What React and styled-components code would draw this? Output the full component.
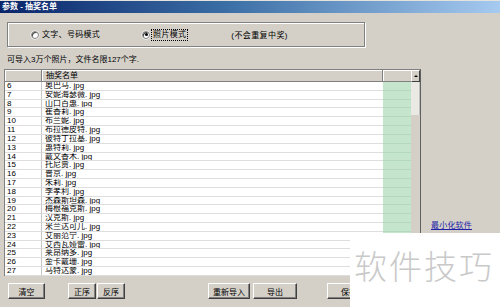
import React from "react";
import styled, { createGlobalStyle, css } from "styled-components";

const GlobalStyle = createGlobalStyle`
  html, body { margin: 0; padding: 0; background: #d4d0c8; }
  * { box-sizing: border-box; }
`;

const FONT = `"Liberation Sans", "Noto Sans CJK SC", sans-serif`;

const Window = styled.div`
  position: relative;
  width: 500px;
  height: 307px;
  overflow: hidden;
  background: #d4d0c8;
  font-family: ${FONT};
  font-size: 8px;
  color: #000;
  display: flex;
  flex-direction: column;
`;

const TitleBar = styled.div`
  height: 13px;
  border-top: 1px solid #e4e2dc;
  background: linear-gradient(90deg, #0a246a 0%, #3a6ea5 45%, #a6caf0 100%);
  color: #fff;
  font-weight: bold;
  font-size: 8px;
  line-height: 12px;
  padding-left: 2px;
  white-space: pre;
`;

const GroupBox = styled.div`
  margin: 9px 0 0 7px;
  width: 358px;
  height: 25px;
  border: 1px solid #808080;
  box-shadow: inset 1px 1px 0 #fff, 1px 1px 0 #fff;
  display: flex;
  align-items: center;
`;

const RadioOption = styled.div`
  display: flex;
  align-items: center;
  gap: 2px;
  margin-left: ${(p) => p.$left}px;
`;

const RadioCircle = styled.span`
  width: 8px;
  height: 8px;
  border-radius: 50%;
  background: #fff;
  border: 1px solid #808080;
  box-shadow: inset 1px 1px 0 #404040, 0 0 0 0.5px #fff;
  display: flex;
  align-items: center;
  justify-content: center;
  &::after {
    content: "";
    width: 3px;
    height: 3px;
    border-radius: 50%;
    background: ${(p) => (p.$checked ? "#000" : "transparent")};
  }
`;

const RadioLabel = styled.span`
  line-height: 10px;
  padding: 0 1px;
  letter-spacing: 0.3px;
  ${(p) =>
    p.$focus &&
    css`
      outline: 1px dotted #000;
      outline-offset: 0;
    `}
`;

const Note = styled.span`
  margin-left: 44px;
  letter-spacing: 0.4px;
`;

const InfoText = styled.div`
  margin: 8px 0 0 7px;
  height: 10px;
  line-height: 10px;
`;

const ListArea = styled.div`
  margin-top: 4px;
  height: 207px;
  display: flex;
`;

const Table = styled.div`
  margin-left: 4px;
  width: 417px;
  height: 207px;
  border-left: 1px solid #808080;
  border-top: 1px solid #808080;
  border-right: 1px solid #606060;
  display: flex;
  flex-direction: column;
  background: #d4d0c8;
`;

const COLS = "37px 341px 28px 9px";

const Header = styled.div`
  display: grid;
  grid-template-columns: ${COLS};
  height: 12px;
`;

const HeaderCell = styled.div`
  background: #d4d0c8;
  border-right: 1px solid #808080;
  border-bottom: 1px solid #808080;
  box-shadow: inset 1px 1px 0 #fff;
  padding-left: 4px;
  line-height: 11px;
  ${(p) => p.$merge && css`border-right: none;`}
`;

const UpButton = styled.div`
  background: #d4d0c8;
  border: 1px solid;
  border-color: #fff #404040 #404040 #fff;
  display: flex;
  align-items: center;
  justify-content: center;
  &::after {
    content: "";
    border-left: 2px solid transparent;
    border-right: 2px solid transparent;
    border-bottom: 2px solid #000;
  }
`;

const Body = styled.div`
  flex: 1;
  display: flex;
  overflow: hidden;
`;

const Rows = styled.div`
  width: 406px;
  display: flex;
  flex-direction: column;
`;

const Row = styled.div`
  display: grid;
  grid-template-columns: 37px 341px 28px;
  height: 8.82px;
  flex: none;
`;

const Cell = styled.div`
  background: ${(p) => (p.$green ? "#c6e5cd" : "#fff")};
  border-bottom: 1px solid ${(p) => (p.$green ? "#b4d8bc" : "#dedede")};
  border-right: ${(p) => (p.$divider ? "1px solid #c8c8c8" : "none")};
  padding-left: ${(p) => p.$pad || 0}px;
  line-height: 8px;
  font-size: 8px;
  white-space: nowrap;
  overflow: hidden;
`;

const ScrollBar = styled.div`
  width: 9px;
  display: flex;
  flex-direction: column;
  background: #d4d0c8;
`;

const Thumb = styled.div`
  height: 33px;
  background: #ebe9e4;
  border-right: 1px solid #c0c0c0;
`;

const RightPanel = styled.div`
  flex: 1;
  display: flex;
  align-items: flex-end;
  padding: 0 0 46px 10px;
`;

const Link = styled.a`
  color: #2222a8;
  text-decoration: underline;
  line-height: 8px;
  letter-spacing: 0.2px;
  cursor: pointer;
`;

const ButtonBar = styled.div`
  margin-top: 7px;
  height: 16px;
  display: flex;
`;

const Button = styled.div`
  margin-left: ${(p) => p.$left}px;
  width: ${(p) => p.$w}px;
  height: 16px;
  background: #d4d0c8;
  border: 1px solid;
  border-color: #fff #404040 #404040 #fff;
  box-shadow: inset -1px -1px 0 #808080;
  display: flex;
  align-items: center;
  justify-content: center;
  font-size: 8px;
  flex: none;
`;

const Watermark = styled.div`
  position: absolute;
  left: 350px;
  top: 233px;
  width: 150px;
  height: 74px;
  background: #fff;
  color: #c9c9c9;
  font-family: "Noto Sans CJK SC", sans-serif;
  font-weight: 300;
  font-size: 33px;
  letter-spacing: 2px;
  padding: 12px 0 0 4px;
  line-height: 40px;
  white-space: nowrap;
`;

const names = [
  "奥巴马", "安妮海瑟薇", "山口百惠", "崔香莉", "布兰妮", "布拉德皮特",
  "彼特丁拉基", "惠特莉", "戴文香木", "托尼贾", "普京", "朱莉", "李孝利",
  "杰森斯坦森", "梅根福克斯", "汉克斯", "米兰达可儿", "艾丽范宁",
  "艾西瓦娅雷", "莱昂纳多", "金卡戴珊", "马特达蒙", "",
];

export default function App() {
  return (
    <Window>
      <GlobalStyle />
      <TitleBar>参数 - 抽奖名单</TitleBar>
      <GroupBox>
        <RadioOption $left={23}>
          <RadioCircle />
          <RadioLabel>文字、号码模式</RadioLabel>
        </RadioOption>
        <RadioOption $left={41}>
          <RadioCircle $checked />
          <RadioLabel $focus>照片模式</RadioLabel>
        </RadioOption>
        <Note>(不会重复中奖)</Note>
      </GroupBox>
      <InfoText>可导入3万个照片，文件名限127个字.</InfoText>
      <ListArea>
        <Table>
          <Header>
            <HeaderCell />
            <HeaderCell>抽奖名单</HeaderCell>
            <HeaderCell $merge />
            <UpButton />
          </Header>
          <Body>
            <Rows>
              {names.map((n, i) => (
                <Row key={i}>
                  <Cell $pad={2} $divider>{n ? i + 6 : ""}</Cell>
                  <Cell $pad={3}>{n ? `${n}. jpg` : ""}</Cell>
                  <Cell $green />
                </Row>
              ))}
            </Rows>
            <ScrollBar>
              <Thumb />
            </ScrollBar>
          </Body>
        </Table>
        <RightPanel>
          <Link>最小化软件</Link>
        </RightPanel>
      </ListArea>
      <ButtonBar>
        <Button $left={8} $w={37}>清空</Button>
        <Button $left={23} $w={28}>正序</Button>
        <Button $left={1} $w={28}>反序</Button>
        <Button $left={83} $w={42}>重新导入</Button>
        <Button $left={3} $w={44}>导出</Button>
        <Button $left={30} $w={44}>保存</Button>
      </ButtonBar>
      <Watermark>软件技巧</Watermark>
    </Window>
  );
}
